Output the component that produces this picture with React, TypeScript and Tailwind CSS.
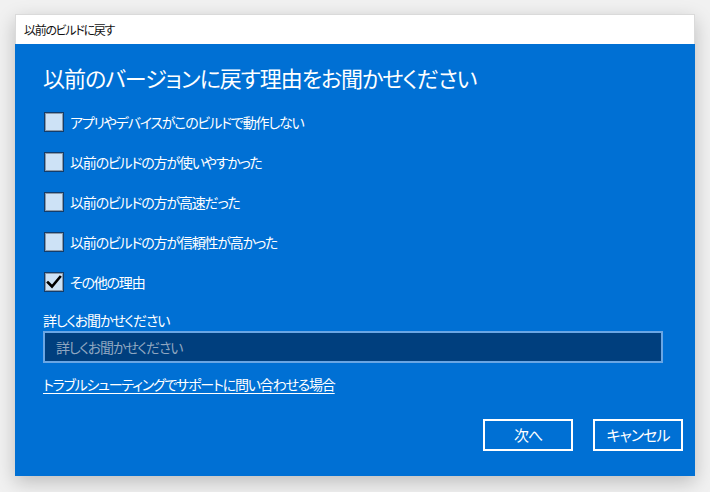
import React from "react";

const jp = "font-['Noto_Sans_CJK_JP','Noto_Sans',sans-serif] [font-feature-settings:'palt']";

function Box({ checked }: { checked?: boolean }) {
  return (
    <div className="w-[20px] h-[20px] border border-[#143d6b] bg-[#8d9aa8] p-px shrink-0">
      <div className="w-full h-full bg-[#cde2f6] flex items-center justify-center">
        {checked && (
          <svg width="16" height="16" viewBox="0 0 16 16">
            <path d="M2 8.5 L6 12.5 L14 3" fill="none" stroke="#000" strokeWidth="2.6" strokeLinecap="square" />
          </svg>
        )}
      </div>
    </div>
  );
}

const items = [
  { t: "アプリやデバイスがこのビルドで動作しない" },
  { t: "以前のビルドの方が使いやすかった" },
  { t: "以前のビルドの方が高速だった" },
  { t: "以前のビルドの方が信頼性が高かった" },
  { t: "その他の理由", c: true },
];

export default function App() {
  return (
    <div className={`w-[710px] h-[492px] bg-[#f1f1f1] pt-[14px] pl-[15px] overflow-hidden ${jp}`}>
      <div className="w-[680px] shadow-[0_6px_18px_rgba(0,0,0,0.22)]">
        <div className="h-[30px] bg-white border border-b-0 border-[#dadada] flex items-center pl-[8px] text-[12px] tracking-[-1.3px] text-[#111]">
          以前のビルドに戻す
        </div>
        <div className="h-[432px] bg-[#0070d4] pl-[28px] pr-[12px] pt-[17px] flex flex-col text-white">
          <div className="h-[32px] leading-[32px] text-[22px] tracking-[-1px]">以前のバージョンに戻す理由をお聞かせください</div>
          <div className="mt-[9px] flex flex-col">
            {items.map((it) => (
              <div key={it.t} className="h-[40px] flex items-center">
                <div className="ml-px">
                  <Box checked={it.c} />
                </div>
                <span className="ml-[6px] text-[14px] leading-[20px] tracking-[-1.2px]">{it.t}</span>
              </div>
            ))}
          </div>
          <div className="mt-[8px] h-[20px] leading-[20px] text-[14px] tracking-[-1.2px]">詳しくお聞かせください</div>
          <div className="mt-px w-[620px] h-[32px] border-2 border-[#6aa6e4] bg-[#003f7e] flex items-center pl-[11px] text-[14px] tracking-[-1.2px] text-[#8fa6c0]">
            詳しくお聞かせください
          </div>
          <div className="mt-[11px] h-[20px] leading-[20px] text-[14px] tracking-[-1.2px]">
            <span className="underline underline-offset-[3px]">トラブルシューティングでサポートに問い合わせる場合</span>
          </div>
          <div className="mt-[25px] flex justify-end gap-[20px]">
            <div className="w-[90px] h-[32px] border-2 border-white flex items-center justify-center text-[15px] tracking-[-1px]">次へ</div>
            <div className="w-[90px] h-[32px] border-2 border-white flex items-center justify-center text-[15px] tracking-[-1px]">キャンセル</div>
          </div>
        </div>
      </div>
    </div>
  );
}
